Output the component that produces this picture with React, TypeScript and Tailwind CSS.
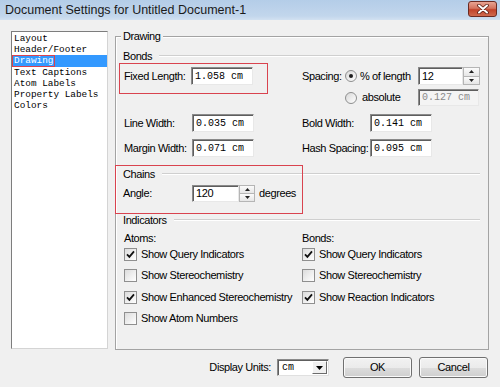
import React from "react";

function Field({ w, children, disabled = false, mono = true }: { w: string; children: React.ReactNode; disabled?: boolean; mono?: boolean }) {
  return (
    <div
      className={`${w} h-full flex items-center pl-[3px] border border-t-[#8a8a8a] border-l-[#8a8a8a] border-r-[#e8e8e8] border-b-[#e8e8e8] shadow-[inset_1px_1px_0_#5e5e5e] ${disabled ? "bg-[#f4f4f4] text-[#8a8a8a]" : "bg-white text-black"} ${mono ? "font-['Liberation_Mono',monospace] text-[10px] tracking-[0px]" : ""}`}
    >
      {children}
    </div>
  );
}

function Spinner({ w }: { w: string }) {
  return (
    <div className={`${w} h-full flex flex-col border border-[#b5b5b5] bg-[#f0f0f0]`}>
      <div className="flex-1 flex items-center justify-center border-b border-[#b5b5b5] bg-[linear-gradient(#fbfbfb,#e6e6e6)]">
        <svg width="5" height="3" viewBox="0 0 5 3">
          <path d="M0 3 L2.5 0 L5 3Z" fill="#222" />
        </svg>
      </div>
      <div className="flex-1 flex items-center justify-center bg-[linear-gradient(#fbfbfb,#e6e6e6)]">
        <svg width="5" height="3" viewBox="0 0 5 3">
          <path d="M0 0 L2.5 3 L5 0Z" fill="#222" />
        </svg>
      </div>
    </div>
  );
}

function Radio({ on }: { on?: boolean }) {
  return (
    <div className="w-[12px] h-[12px] rounded-full border border-[#8e8f8f] bg-[linear-gradient(135deg,#d8d8d8,#ffffff)] flex items-center justify-center shrink-0">
      {on && <div className="w-[4px] h-[4px] rounded-full bg-[#1e1e1e]" />}
    </div>
  );
}

function Check({ on }: { on?: boolean }) {
  return (
    <div className="w-[13px] h-[13px] border border-[#8f8f8f] bg-[linear-gradient(135deg,#dcdcdc,#ffffff)] flex items-center justify-center shrink-0">
      {on && (
        <svg width="9" height="9" viewBox="0 0 9 9">
          <path d="M1 4.3 L3.4 6.8 L8 1.4" stroke="#111" strokeWidth="1.8" fill="none" />
        </svg>
      )}
    </div>
  );
}

function Header({ label }: { label: string }) {
  return (
    <div className="h-[14px] flex items-center pl-[7px] pr-[8px]">
      <span className="leading-[14px]">{label}</span>
      <div className="ml-[7px] flex-1 h-[2px] border-t border-t-[#cfcfcf] border-b border-b-white" />
    </div>
  );
}

function CheckRow({ on, label, cls }: { on?: boolean; label: string; cls: string }) {
  return (
    <div className={`${cls} h-[16px] flex items-center`}>
      <Check on={on} />
      <span className="ml-[4px] leading-[16px] whitespace-nowrap">{label}</span>
    </div>
  );
}

function Button({ label, cls }: { label: string; cls: string }) {
  return (
    <div
      className={`${cls} w-[69px] h-[21px] rounded-[3px] border border-[#707070] bg-[linear-gradient(#f2f2f2_0%,#ebebeb_50%,#dddddd_50%,#cfcfcf_100%)] shadow-[inset_0_0_0_1px_#fafafa] flex items-center justify-center`}
    >
      {label}
    </div>
  );
}

export default function App() {
  const items = ["Layout", "Header/Footer", "Drawing", "Text Captions", "Atom Labels", "Property Labels", "Colors"];
  return (
    <div className="w-[500px] h-[387px] overflow-hidden bg-[#f0f0f0] font-['Liberation_Sans',Arial,sans-serif] text-[11px] tracking-[-0.4px] text-black flex flex-col">
      {/* Title bar */}
      <div className="h-[20px] flex items-center bg-[linear-gradient(#b4cde8,#c2d6ec_80%,#d2e1f1)] pl-[5px] pr-[3px]">
        <span className="text-[12.5px] tracking-[0px] leading-[20px] text-[#1a1a1a] flex-1">Document Settings for Untitled Document-1</span>
        <div className="w-[29px] h-[16px] -mt-[2px] rounded-[3px] border border-[#6b2a22] bg-[linear-gradient(#e8a493,#d4735e_45%,#c1432b_55%,#cf6a4f)] flex items-center justify-center">
          <svg width="12" height="10" viewBox="0 0 12 10">
            <path d="M2 1.5 L10 8.5 M10 1.5 L2 8.5" stroke="#5a1f16" strokeWidth="3.6" strokeLinecap="round" />
            <path d="M2 1.5 L10 8.5 M10 1.5 L2 8.5" stroke="#ffffff" strokeWidth="2" strokeLinecap="round" />
          </svg>
        </div>
      </div>

      {/* Body */}
      <div className="flex pt-[11px]">
        {/* List */}
        <div className="ml-[11px] w-[97px] h-[318px] bg-white border border-t-[#7d7d7d] border-l-[#7d7d7d] border-r-[#d4d4d4] border-b-[#d4d4d4] pt-[1px] font-['Liberation_Mono',monospace] text-[9.4px] tracking-[0px]">
          {items.map((it) => (
            <div
              key={it}
              className={`h-[11.2px] leading-[11.2px] pl-[2px] relative ${it === "Drawing" ? "bg-[#3399ff] text-white" : ""}`}
            >
              {it}
              {it === "Drawing" && <div className="absolute left-0 top-0 w-[43px] h-[12px] border border-[#d9434f]" />}
            </div>
          ))}
        </div>

        {/* Drawing group */}
        <div className="ml-[7px] mt-[5px] w-[374px] h-[314px] border border-[#a3a3a3] shadow-[inset_1px_1px_0_#ffffff] flex flex-col">
          <div className="-mt-[8px] ml-[5px] h-[14px] w-fit px-[2px] bg-[#f0f0f0] leading-[14px]">Drawing</div>

          <div className="mt-[6px]">
            <Header label="Bonds" />
          </div>

          <div className="flex">
            {/* left column */}
            <div className="ml-[3px] w-[183px] flex flex-col">
              <div className="w-[149px] h-[31px] pt-[4px] pl-[5px] shadow-[inset_0_0_0_1px_#d9434f]">
                <div className="h-[18px] flex items-center">
                  <span className="w-[67px]">Fixed Length:</span>
                  <Field w="w-[62px]">1.058 cm</Field>
                </div>
              </div>
              <div className="mt-[20px] h-[18px] flex items-center pl-[5px]">
                <span className="w-[68px]">Line Width:</span>
                <Field w="w-[62px]">0.035 cm</Field>
              </div>
              <div className="mt-[7px] h-[18px] flex items-center pl-[5px]">
                <span className="w-[68px]">Margin Width:</span>
                <Field w="w-[62px]">0.071 cm</Field>
              </div>
            </div>
            {/* right column */}
            <div className="flex flex-col pt-[4px]">
              <div className="h-[18px] flex items-center">
                <span className="w-[43px]">Spacing:</span>
                <Radio on />
                <span className="w-[61px] pl-[3px]">% of length</span>
                <Field w="w-[45px]" mono={false}>
                  12
                </Field>
                <Spinner w="w-[17px]" />
              </div>
              <div className="mt-[4px] h-[17px] flex items-center pl-[43px]">
                <Radio />
                <span className="w-[61px] pl-[5px]">absolute</span>
                <Field w="w-[61px]" disabled>
                  0.127 cm
                </Field>
              </div>
              <div className="mt-[8px] h-[18px] flex items-center">
                <span className="w-[68px]">Bold Width:</span>
                <Field w="w-[62px]">0.141 cm</Field>
              </div>
              <div className="mt-[7px] h-[18px] flex items-center">
                <span className="w-[68px]">Hash Spacing:</span>
                <Field w="w-[62px]">0.095 cm</Field>
              </div>
            </div>
          </div>

          {/* Chains */}
          <div className="relative mt-[8px] h-[49px] flex flex-col">
            <div className="absolute -left-[1px] top-0 w-[188px] h-[49px] border border-[#d9434f] pointer-events-none" />
            <div className="mt-[2px]">
              <Header label="Chains" />
            </div>
            <div className="mt-[4px] h-[17px] flex items-center pl-[7px]">
              <span className="w-[69px]">Angle:</span>
              <Field w="w-[47px]" mono={false}>
                120
              </Field>
              <Spinner w="w-[16px]" />
              <span className="ml-[4px]">degrees</span>
            </div>
          </div>

          <div className="-mt-[1px]">
            <Header label="Indicators" />
          </div>

          <div className="mt-[4px] flex">
            <div className="ml-[8px] w-[178px] flex flex-col">
              <div className="h-[14px] leading-[14px]">Atoms:</div>
              <CheckRow cls="mt-[1px]" on label="Show Query Indicators" />
              <CheckRow cls="mt-[5px]" label="Show Stereochemistry" />
              <CheckRow cls="mt-[6px]" on label="Show Enhanced Stereochemistry" />
              <CheckRow cls="mt-[5px]" label="Show Atom Numbers" />
            </div>
            <div className="flex flex-col">
              <div className="h-[14px] leading-[14px]">Bonds:</div>
              <CheckRow cls="mt-[1px]" on label="Show Query Indicators" />
              <CheckRow cls="mt-[5px]" label="Show Stereochemistry" />
              <CheckRow cls="mt-[6px]" on label="Show Reaction Indicators" />
            </div>
          </div>
        </div>
      </div>

      {/* Bottom row */}
      <div className="mt-[7px] h-[21px] flex items-center justify-end pr-[12px]">
        <span>Display Units:</span>
        <div className="ml-[6px] w-[52px] h-[17px] bg-white border border-t-[#8a8a8a] border-l-[#8a8a8a] border-r-[#e0e0e0] border-b-[#e0e0e0] shadow-[inset_1px_1px_0_#5e5e5e] flex items-center">
          <span className="flex-1 pl-[4px] font-['Liberation_Mono',monospace] text-[10px] tracking-[0px]">cm</span>
          <div className="w-[15px] h-[13px] mr-[1px] bg-[#f0f0f0] border border-t-white border-l-white border-r-[#6b6b6b] border-b-[#6b6b6b] flex items-center justify-center">
            <svg width="7" height="4" viewBox="0 0 7 4">
              <path d="M0 0 L7 0 L3.5 4Z" fill="#000" />
            </svg>
          </div>
        </div>
        <Button cls="ml-[14px]" label="OK" />
        <Button cls="ml-[7px]" label="Cancel" />
      </div>
    </div>
  );
}
